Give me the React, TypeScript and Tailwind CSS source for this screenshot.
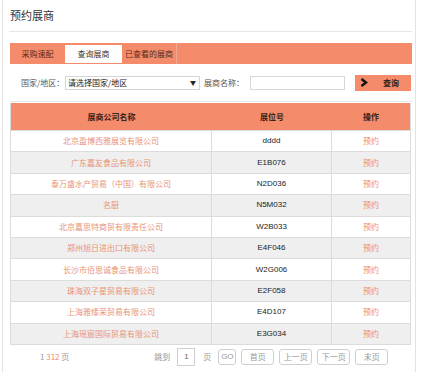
const rows = [
  { name: "北京盈博西雅展览有限公司", booth: "dddd" },
  { name: "广东嘉友食品有限公司", booth: "E1B076" },
  { name: "泰万盛水产贸易（中国）有限公司", booth: "N2D036" },
  { name: "名厨", booth: "N5M032" },
  { name: "北京嘉思特商贸有限责任公司", booth: "W2B033" },
  { name: "郑州旭日进出口有限公司", booth: "E4F046" },
  { name: "长沙市佰思诚食品有限公司", booth: "W2G006" },
  { name: "珠海双子星贸易有限公司", booth: "E2F058" },
  { name: "上海雅缘荣贸易有限公司", booth: "E4D107" },
  { name: "上海瑶宸国际贸易有限公司", booth: "E3G034" },
];

const pageButtons = ["首页", "上一页", "下一页", "末页"];

export default function App() {
  return (
    <div className="w-[425px] h-[372px] overflow-hidden bg-white font-['Noto_Sans_CJK_SC','Liberation_Sans',sans-serif] text-[#333]">
      <div className="ml-[2px] w-[414px] h-full border-l border-r border-[#e3e3e3] pl-[7px] pr-[3px]">
        {/* 标题 */}
        <div className="h-[32px] flex items-center pl-[1px] border-b border-[#e6e6e6] -ml-[1px]">
          <span className="text-[11px] leading-none">预约展商</span>
        </div>

        {/* 标签栏 */}
        <div className="mt-[11px] h-[21px] bg-[#f48b6b] flex items-end text-[8px] leading-none">
          <div className="w-[55px] h-full flex items-center justify-center text-[#5a2a1a]">采购速配</div>
          <div className="w-[57px] h-[18px] mb-[1px] bg-white flex items-center justify-center text-[#333]">查询展商</div>
          <div className="w-[55px] h-full flex items-center justify-center text-[#5a2a1a] border-r border-[#f6a78f]">已查看的展商</div>
        </div>

        {/* 筛选 */}
        <div className="h-[38px] flex items-center text-[8px] leading-none text-[#555] border-b border-[#e8e8e8]">
          <span className="ml-[11px] w-[44px]">国家/地区：</span>
          <div className="w-[135px] h-[14px] border border-[#d5d5d5] flex items-center justify-between pl-[2px] pr-[3px] text-[#222]">
            <span>请选择国家/地区</span>
            <span className="text-[6px]">▼</span>
          </div>
          <span className="ml-[4px] w-[46px]">展商名称：</span>
          <div className="w-[95px] h-[14px] border border-[#d8d8d8] bg-white" />
          <button className="ml-[10px] w-[56px] h-[16px] bg-[#f48b6b] flex items-center pl-[5px] text-[8px] font-bold text-[#222]">
            <svg width="8" height="9" viewBox="0 0 8 9">
              <polyline points="1.5,1 6,4.5 1.5,8" fill="none" stroke="#111" strokeWidth="2.4" />
            </svg>
            <span className="ml-[15px]">查询</span>
          </button>
        </div>

        {/* 表格 */}
        <div className="mt-[1px] w-[401px] border-l border-r border-b border-[#dcdcdc] text-[8px] leading-none">
          <div className="h-[27px] bg-[#f48b6b] grid grid-cols-[201px_120px_1fr] items-center text-center font-bold text-[#3a2218]">
            <span>展商公司名称</span>
            <span>展位号</span>
            <span>操作</span>
          </div>
          {rows.map((r, i) => (
            <div
              key={r.booth}
              className={`h-[21.4px] grid grid-cols-[201px_120px_1fr] items-stretch text-center border-t border-[#dcdcdc] ${i % 2 ? "bg-[#efefef]" : "bg-white"}`}
            >
              <span className="flex items-center justify-center text-[#e99374] border-r border-[#dcdcdc]">{r.name}</span>
              <span className="flex items-center justify-center text-[#222] font-['Liberation_Sans',sans-serif] border-r border-[#dcdcdc]">{r.booth}</span>
              <span className="flex items-center justify-center text-[#f08a6a]">预约</span>
            </div>
          ))}
        </div>

        {/* 分页 */}
        <div className="h-[24px] flex items-center text-[8px] leading-none text-[#999]">
          <span className="ml-[30px]">
            1 <span className="text-[#f08a6a]">312</span> 页
          </span>
          <span className="ml-[85px]">跳到</span>
          <div className="ml-[7px] w-[18px] h-[18px] border border-[#cfcfcf] flex items-center justify-center text-[#666] font-['Liberation_Sans',sans-serif]">1</div>
          <span className="ml-[8px]">页</span>
          <div className="ml-[7px] w-[18px] h-[16px] border border-[#cfcfcf] rounded-[3px] flex items-center justify-center font-['Liberation_Sans',sans-serif]">GO</div>
          {pageButtons.map((b) => (
            <div key={b} className="ml-[5px] w-[33px] h-[16px] border border-[#cfcfcf] rounded-[3px] flex items-center justify-center">
              {b}
            </div>
          ))}
        </div>
      </div>
    </div>
  );
}
